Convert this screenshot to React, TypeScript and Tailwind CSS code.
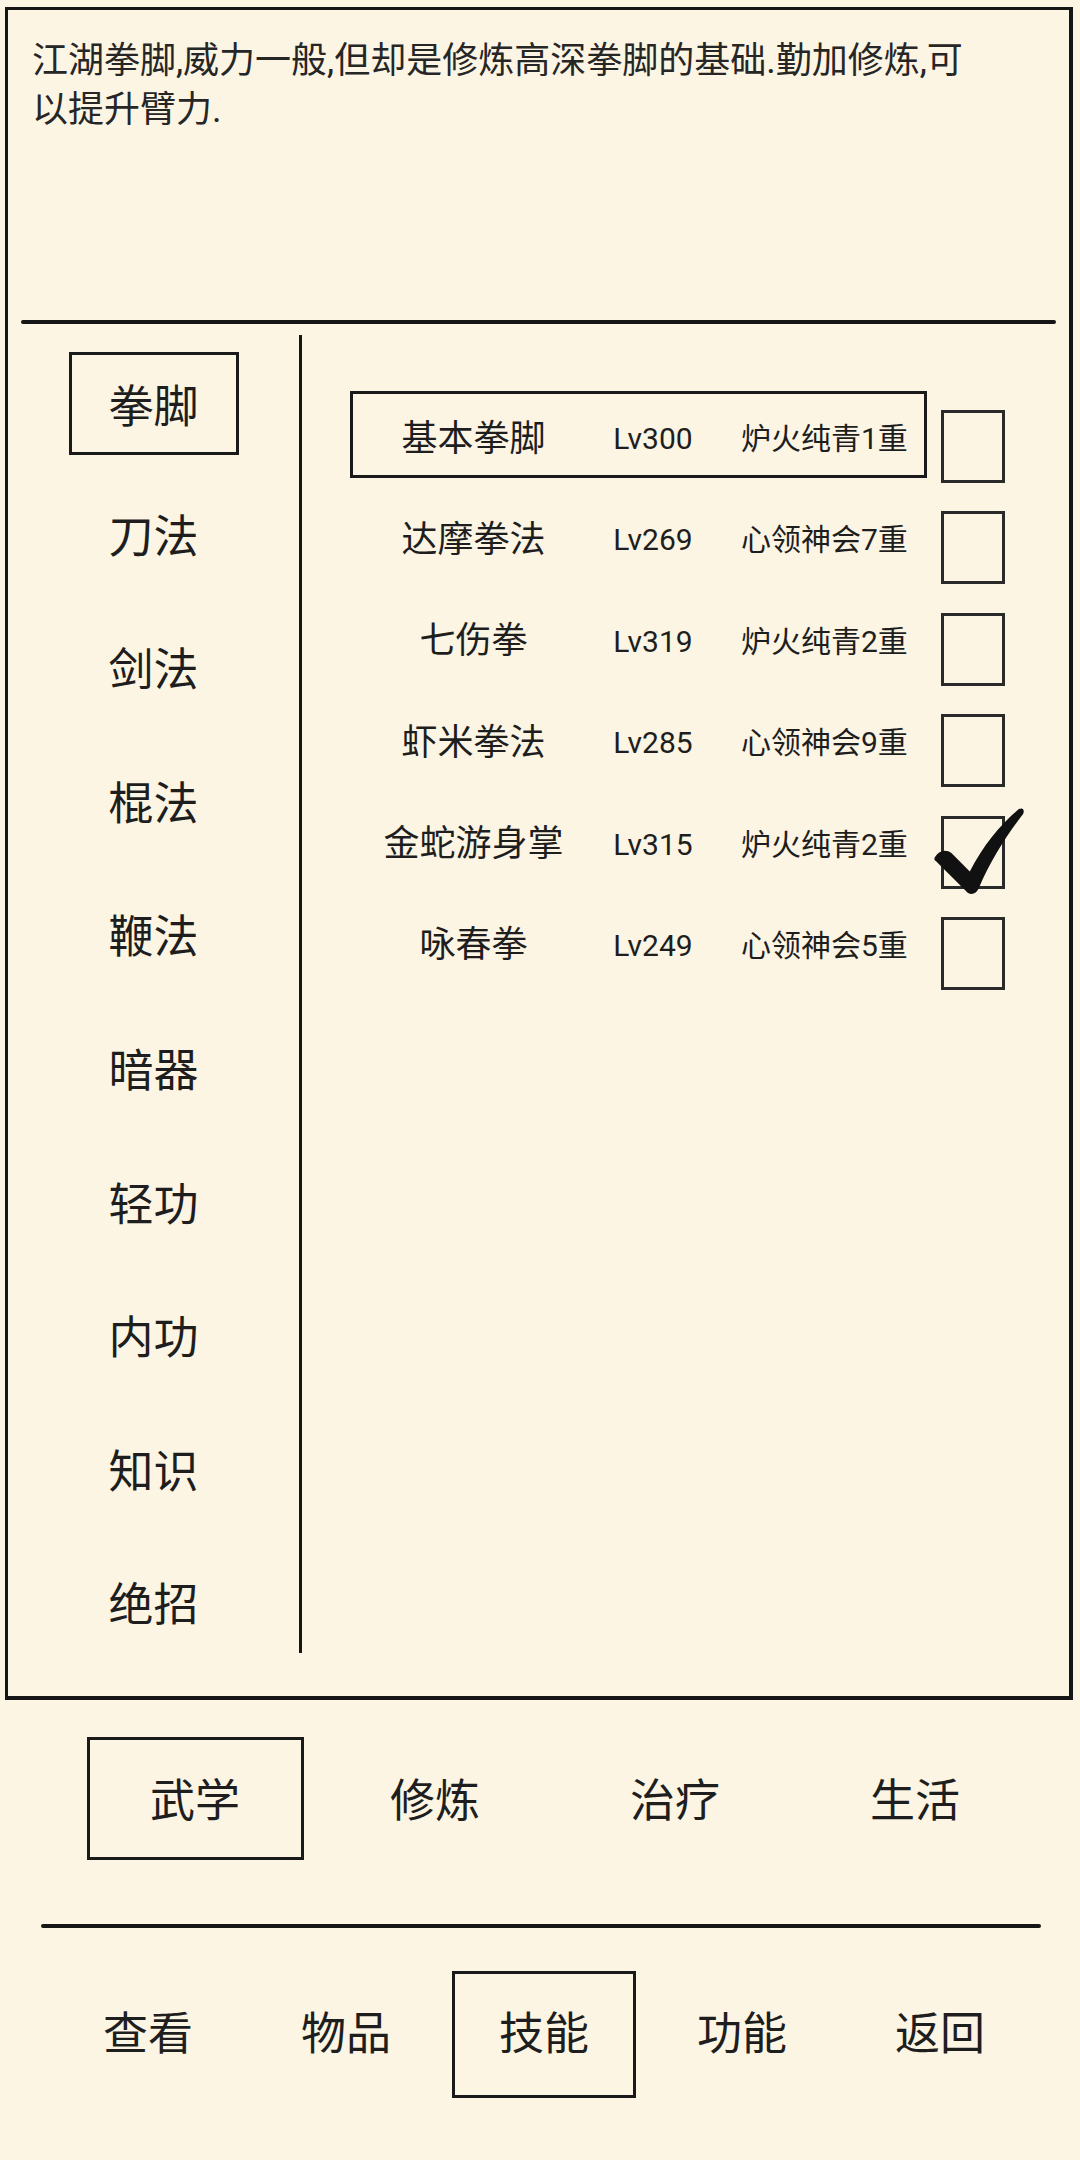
import React from "react";

type Skill = {
  name: string;
  level: string;
  realm: string;
  checked?: boolean;
};

const categories = ["拳脚", "刀法", "剑法", "棍法", "鞭法", "暗器", "轻功", "内功", "知识", "绝招"];

const skills: Skill[] = [
  { name: "基本拳脚", level: "Lv300", realm: "炉火纯青1重" },
  { name: "达摩拳法", level: "Lv269", realm: "心领神会7重" },
  { name: "七伤拳", level: "Lv319", realm: "炉火纯青2重" },
  { name: "虾米拳法", level: "Lv285", realm: "心领神会9重" },
  { name: "金蛇游身掌", level: "Lv315", realm: "炉火纯青2重", checked: true },
  { name: "咏春拳", level: "Lv249", realm: "心领神会5重" },
];

const tabs = ["武学", "修炼", "治疗", "生活"];
const navs = ["查看", "物品", "技能", "功能", "返回"];

function CheckMark() {
  return (
    <svg
      className="absolute left-[-11px] top-[-13px]"
      width="92"
      height="92"
      viewBox="0 0 90 90"
    >
      <path
        d="M2 50 C6 43 13 42 18 46 L36 64 C49 39 65 19 84 3 C88 1 90 4 88 8 C71 30 56 54 45 80 C42 87 36 88 32 83 L3 54 C1 53 1 51 2 50 Z"
        fill="#111"
      />
    </svg>
  );
}

export default function App() {
  return (
    <div
      className="w-[1080px] h-[2160px] bg-[#fcf5e4] text-[#1e1e1e] overflow-hidden"
      style={{ fontFamily: "Roboto, 'Noto Sans CJK SC', sans-serif" }}
    >
      {/* main panel */}
      <div className="ml-[5px] mt-[7px] w-[1068px] h-[1693px] border-l-[3px] border-t-[3px] border-r-[4px] border-b-[4px] border-[#161616] flex flex-col">
        <div className="h-[310px] pl-[24px] pt-[27px] text-[36px] leading-[49px] text-[#262626]">
          江湖拳脚,威力一般,但却是修炼高深拳脚的基础.勤加修炼,可
          <br />
          以提升臂力.
        </div>
        <div className="mx-[13px] h-[4px] bg-[#161616] rounded-full" />

        <div className="flex flex-1">
          <div className="w-[291px] pt-[13px] flex flex-col">
            {categories.map((c, i) => (
              <div key={c} className="h-[133.6px] flex items-center justify-center shrink-0">
                {i === 0 ? (
                  <div className="w-[170px] h-[103px] border-[3px] border-[#1a1a1a] flex items-center justify-center text-[45px] pt-[8px]">
                    {c}
                  </div>
                ) : (
                  <span className="text-[45px]">{c}</span>
                )}
              </div>
            ))}
          </div>
          <div className="w-[3px] h-[1318px] mt-[11px] bg-[#161616]" />

          <div className="flex-1 pt-[63px] flex flex-col">
            {skills.map((s, i) => (
              <div key={s.name} className="h-[101.4px] flex items-start shrink-0">
                <div
                  className={
                    "ml-[48px] mt-[4px] w-[577px] h-[87px] flex items-center pt-[8px] border-[3px] " +
                    (i === 0 ? "border-[#1a1a1a]" : "border-transparent")
                  }
                >
                  <span className="w-[241px] text-center text-[36px]">{s.name}</span>
                  <span className="w-[118px] text-center text-[30px]">{s.level}</span>
                  <span className="pl-[29px] text-[30px] whitespace-nowrap">{s.realm}</span>
                </div>
                <div className="relative ml-[14px] mt-[23px] w-[64px] h-[73px] border-[3px] border-[#2a2a2a]">
                  {s.checked && <CheckMark />}
                </div>
              </div>
            ))}
          </div>
        </div>
      </div>

      {/* sub tabs */}
      <div className="flex pl-[75px] mt-[37px]">
        {tabs.map((t, i) => (
          <div key={t} className="w-[240px] flex justify-center">
            <div
              className={
                "w-[217px] h-[123px] flex items-center justify-center text-[45px] pt-[6px] border-[3px] " +
                (i === 0 ? "border-[#1a1a1a]" : "border-transparent")
              }
            >
              {t}
            </div>
          </div>
        ))}
      </div>

      <div className="ml-[41px] mt-[64px] w-[1000px] h-[4px] bg-[#161616] rounded-full" />

      {/* bottom nav */}
      <div className="flex pl-[49px] mt-[43px]">
        {navs.map((n, i) => (
          <div key={n} className="w-[198px] flex justify-center">
            <div
              className={
                "w-[184px] h-[127px] flex items-center justify-center text-[45px] border-[3px] " +
                (i === 2 ? "border-[#1a1a1a]" : "border-transparent")
              }
            >
              {n}
            </div>
          </div>
        ))}
      </div>
    </div>
  );
}
